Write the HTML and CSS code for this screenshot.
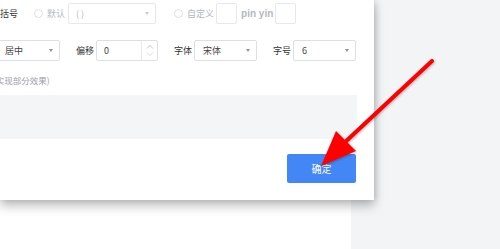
FILE: index.html
```html
<!DOCTYPE html>
<html lang="zh-CN">
<head>
  <meta charset="UTF-8">
  <title>设置</title>
  <link rel="stylesheet" href="styles.css">
</head>
<body>

  <div class="page">
    <div class="main-panel"></div>
    <div class="side-panel"></div>

    <div class="dialog">
      <div class="row row-top">
        <span class="label">括号</span>
        <span class="radio gap-radio"></span>
        <span class="label muted gap-xs">默认</span>
        <div class="select disabled w-bracket">
          <span>( )</span><i class="caret"></i>
        </div>
        <span class="radio gap-radio2"></span>
        <span class="label muted gap-xs">自定义</span>
        <div class="box gap-s"></div>
        <span class="pinyin">pin yin</span>
        <div class="box"></div>
      </div>

      <div class="row row-font">
        <div class="select w-align">
          <span>居中</span><i class="caret"></i>
        </div>
        <span class="label gap-l">偏移</span>
        <div class="number gap-s">
          <span>0</span>
          <div class="spin">
            <svg width="8" height="5" viewBox="0 0 8 5"><path d="M1 4.5 L4 1.5 L7 4.5" fill="none" stroke="#b8bcc4" stroke-width="0.9"/></svg>
            <svg width="8" height="5" viewBox="0 0 8 5"><path d="M1 0.5 L4 3.5 L7 0.5" fill="none" stroke="#d4d7dd" stroke-width="0.9"/></svg>
          </div>
        </div>
        <span class="label gap-l">字体</span>
        <div class="select w-font gap-s">
          <span>宋体</span><i class="caret"></i>
        </div>
        <span class="label gap-l">字号</span>
        <div class="select w-font gap-s">
          <span>6</span><i class="caret"></i>
        </div>
      </div>

      <div class="caption">(实现部分效果)</div>
      <div class="preview"></div>

      <div class="footer">
        <button class="btn-primary">确定</button>
      </div>
    </div>

    <svg class="pointer" width="500" height="249" viewBox="0 0 500 249">
      <line x1="432" y1="61" x2="343" y2="144" stroke="#ff0000" stroke-width="4" stroke-linecap="round"/>
      <polygon points="321,166 336,131 356,151" fill="#ff0000"/>
    </svg>
  </div>

</body>
</html>
```

FILE: styles.css
```css
body {
  margin: 0;
  font-family: "Noto Sans CJK SC", "Noto Sans", sans-serif;
}
.page {
  position: relative;
  width: 500px;
  height: 249px;
  display: flex;
  overflow: hidden;
}
.main-panel {
  width: 351px;
  background: #fff;
}
.side-panel {
  flex: 1;
  background: #f3f4f6;
}
.dialog {
  position: absolute;
  left: 0;
  top: 0;
  width: 374px;
  height: 200px;
  background: #fff;
  box-shadow: 0 6px 10px rgba(0, 0, 0, 0.25), 2px 0 6px rgba(0, 0, 0, 0.12);
  overflow: hidden;
}
.row {
  display: flex;
  align-items: center;
  height: 21px;
  font-size: 9px;
  color: #333;
}
.row-top {
  margin-top: 3px;
}
.row-font {
  margin-top: 16px;
}
.label {
  white-space: nowrap;
  line-height: 1;
}
.muted {
  color: #b4b8bf;
}
.gap-xs { margin-left: 4px; }
.gap-s { margin-left: 2px; }
.gap-l { margin-left: 16px; }
.gap-radio { margin-left: 16px; }
.gap-radio2 { margin-left: 18px; }
.radio {
  width: 9px;
  height: 9px;
  border: 1px solid #dcdfe6;
  border-radius: 50%;
  box-sizing: border-box;
  flex: none;
}
.select, .number, .box {
  height: 21px;
  box-sizing: border-box;
  border: 1px solid #dcdfe6;
  border-radius: 2px;
  background: #fff;
  display: flex;
  align-items: center;
  flex: none;
}
.select {
  justify-content: space-between;
  padding: 0 6px 0 8px;
  color: #444;
}
.select.disabled {
  color: #b4b8bf;
  border-color: #e6e8ec;
  margin-left: 3px;
  padding-left: 7px;
}
.w-bracket { width: 88px; }
.w-align {
  width: 64px;
  margin-left: -4px;
}
.w-font { width: 63px; }
.caret {
  width: 0;
  height: 0;
  border-left: 2.5px solid transparent;
  border-right: 2.5px solid transparent;
  border-top: 3px solid #909399;
}
.select.disabled .caret {
  border-top-color: #c8cbd1;
}
.box {
  width: 21px;
  border-color: #e6e8ec;
}
.pinyin {
  font-family: "Liberation Sans", Arial, sans-serif;
  font-size: 10px;
  font-weight: bold;
  color: #b4b8bf;
  margin: 0 2px 0 4px;
  white-space: nowrap;
}
.number {
  width: 62px;
  padding-left: 7px;
  justify-content: space-between;
  color: #444;
}
.spin {
  width: 15px;
  height: 100%;
  border-left: 1px solid #e6e8ec;
  display: flex;
  flex-direction: column;
  align-items: center;
  justify-content: center;
  gap: 3px;
}
.spin svg {
  display: block;
}
.caption {
  margin-top: 13px;
  margin-left: -7px;
  font-size: 8.5px;
  line-height: 12px;
  color: #9a9ea6;
  white-space: nowrap;
}
.preview {
  margin-top: 9px;
  width: 357px;
  height: 44px;
  background: #f4f5f7;
}
.footer {
  display: flex;
  justify-content: flex-end;
  padding-right: 18px;
  margin-top: 15px;
}
.btn-primary {
  width: 69px;
  height: 29px;
  border: none;
  border-radius: 2px;
  background: #4387f6;
  color: #fff;
  font-family: "Noto Sans CJK SC", sans-serif;
  font-size: 10px;
  padding: 0;
}
.pointer {
  position: absolute;
  left: 0;
  top: 0;
  filter: drop-shadow(1px 1px 1px rgba(0, 0, 0, 0.25));
}
```
